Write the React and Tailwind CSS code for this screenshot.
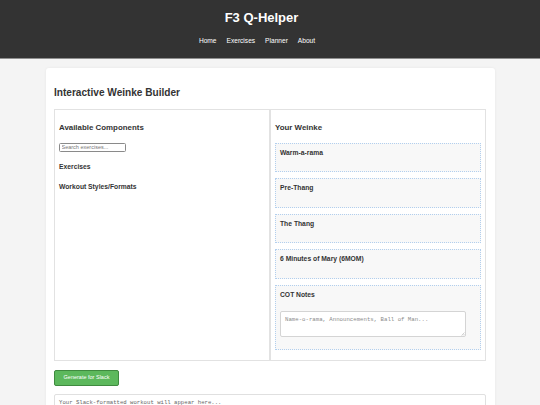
import { useState } from "react";

const sections = ["Warm-a-rama", "Pre-Thang", "The Thang", "6 Minutes of Mary (6MOM)"];

function Header() {
  return (
    <header className="h-[59px] bg-[#333333] border-b border-[#8f8f8f] text-white">
      <div className="flex justify-center pt-[10px] pr-[17px]">
        <h1 className="text-[13px] leading-[15px] font-bold">F3 Q-Helper</h1>
      </div>
      <nav className="flex justify-center gap-[10px] mt-[11.5px] pr-[26px] text-[6.6px] leading-[8px] text-white">
        <a href="#">Home</a>
        <a href="#">Exercises</a>
        <a href="#">Planner</a>
        <a href="#">About</a>
      </nav>
    </header>
  );
}

function App() {
  const [search, setSearch] = useState("");
  const [cot, setCot] = useState("");

  return (
    <div className="min-h-screen bg-[#f4f4f4] font-['Liberation_Sans',Arial,sans-serif] text-[#333]">
      <Header />
      <main className="w-[449px] mx-auto mt-[9px] bg-white rounded-[3px] shadow-[0_0_3px_rgba(0,0,0,0.06)] px-[8.5px] pt-[18.5px] pb-[10px]">
        <h2 className="text-[10.1px] leading-[12px] font-bold mb-[10.5px]">Interactive Weinke Builder</h2>

        <div className="grid grid-cols-2">
          {/* left: available components */}
          <div className="border border-[#e2e2e2] p-[4px]">
            <h3 className="text-[7.9px] leading-[10px] font-bold mt-[9.3px] mb-[9.5px]">Available Components</h3>
            <input
              className="block w-[67px] h-[9px] border border-[#8a8a8a] rounded-[1.5px] px-[1.5px] text-[5.5px] leading-[7px] outline-none placeholder:text-[#777]"
              placeholder="Search exercises..."
              value={search}
              onChange={(e) => setSearch(e.target.value)}
            />
            <h4 className="text-[6.75px] leading-[9px] font-bold mt-[10.5px]">Exercises</h4>
            <h4 className="text-[6.75px] leading-[9px] font-bold mt-[11px]">Workout Styles/Formats</h4>
          </div>

          {/* right: your weinke */}
          <div className="border border-[#e2e2e2] p-[4px]">
            <h3 className="text-[7.9px] leading-[10px] font-bold mt-[9.3px] mb-[9.5px]">Your Weinke</h3>
            {sections.map((s) => (
              <div key={s} className="min-h-[29.5px] mb-[6px] bg-[#f8f8f8] border border-dotted border-[#b2cfee] p-[4px]">
                <h4 className="text-[6.75px] leading-[9px] font-bold">{s}</h4>
              </div>
            ))}
            <div className="mb-[6px] bg-[#f8f8f8] border border-dotted border-[#b2cfee] p-[4px]">
              <h4 className="text-[6.75px] leading-[9px] font-bold">COT Notes</h4>
              <div className="relative w-[95%] mt-[12px] mb-[8px]">
                <textarea
                  className="block w-full h-[26px] bg-white border border-[#d4d4d4] rounded-[2px] px-[4px] py-[4.5px] font-['Liberation_Mono',monospace] text-[5.7px] leading-[7px] resize-none outline-none placeholder:text-[#8a8a8a]"
                  placeholder="Name-o-rama, Announcements, Ball of Man..."
                  value={cot}
                  onChange={(e) => setCot(e.target.value)}
                />
                <svg className="absolute right-[1px] bottom-[1px]" width="4" height="4" viewBox="0 0 4 4">
                  <path d="M0.5 3.5 L3.5 0.5 M2 3.5 L3.5 2" stroke="#a5a5a5" strokeWidth="0.5" />
                </svg>
              </div>
            </div>
          </div>
        </div>

        <button
          type="button"
          className="block mt-[9px] w-[65px] h-[16px] bg-[#5cb85c] border border-[#3f8a3f] rounded-[2px] text-white text-[5.5px] leading-[7px]"
        >
          Generate for Slack
        </button>

        <textarea
          readOnly
          className="block w-full h-[80px] mt-[8px] bg-white border border-[#e0e0e0] rounded-[2px] p-[4px] font-['Liberation_Mono',monospace] text-[5.65px] leading-[7px] resize-none outline-none placeholder:text-[#666]"
          placeholder="Your Slack-formatted workout will appear here..."
        />
      </main>
    </div>
  );
}

export default App;
